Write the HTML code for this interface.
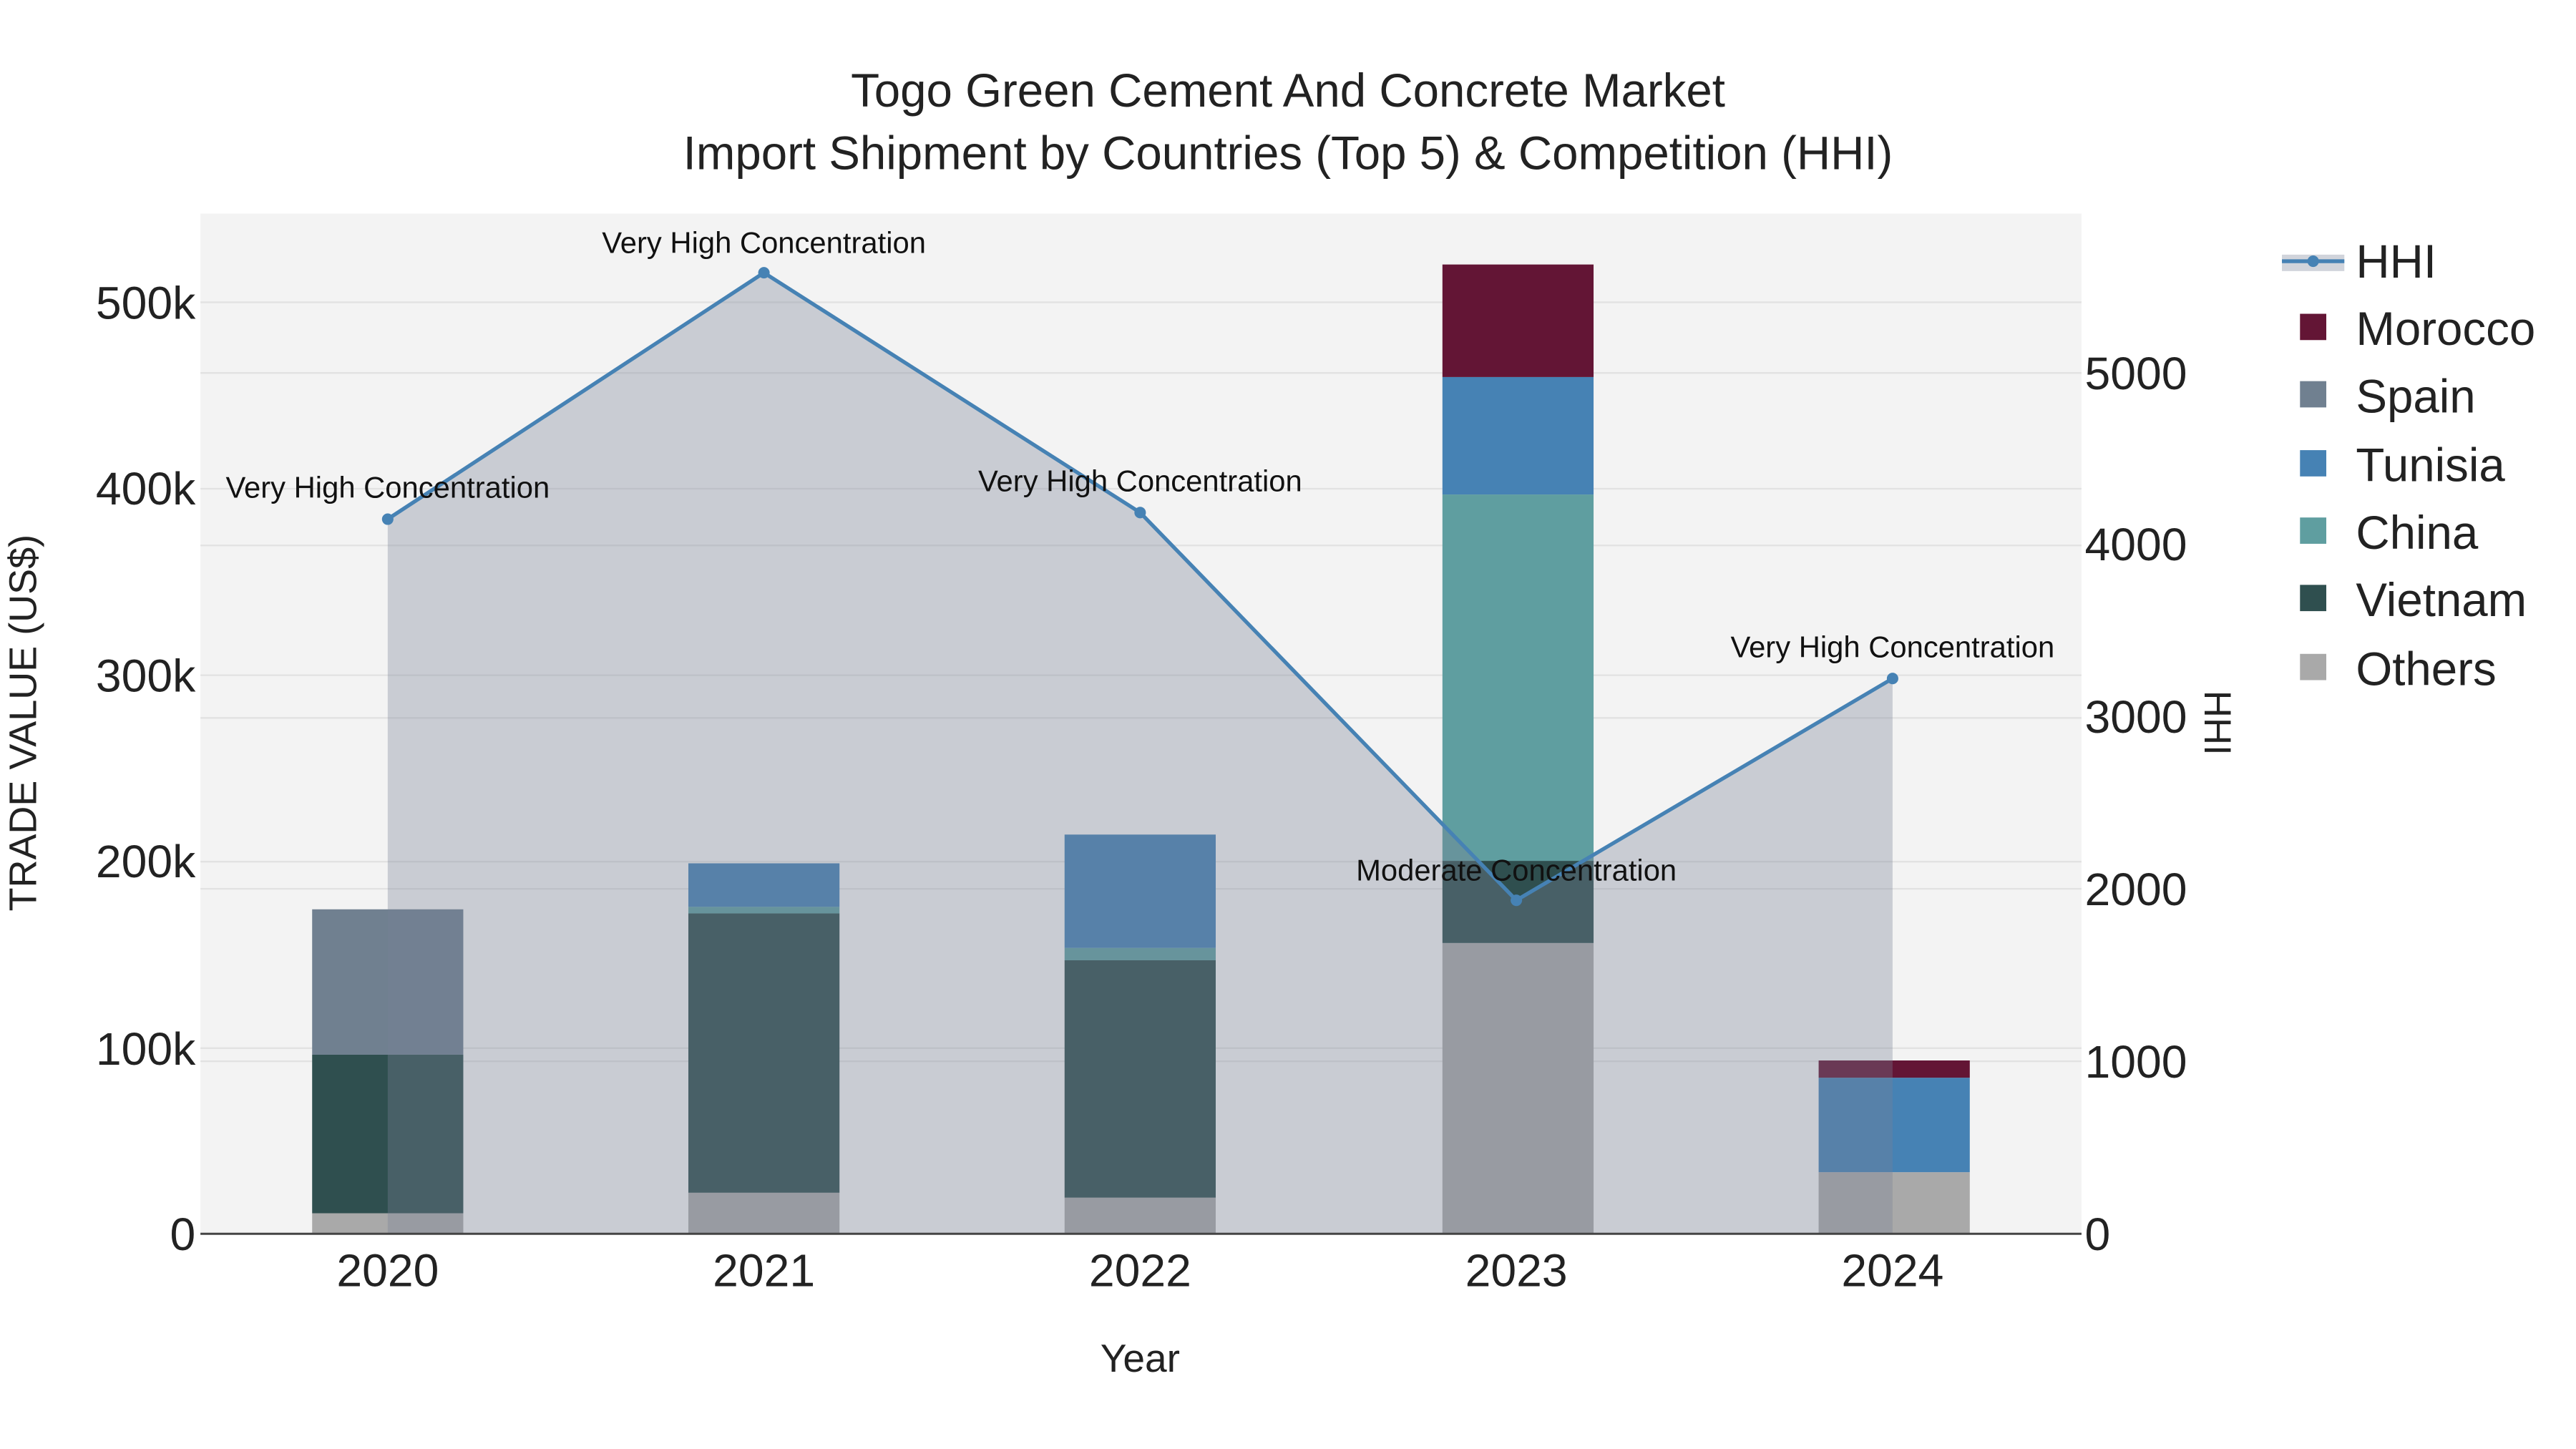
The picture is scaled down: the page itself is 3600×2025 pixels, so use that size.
<!DOCTYPE html>
<html><head><meta charset="utf-8"><style>
html,body{margin:0;padding:0;background:#fff;}
svg{display:block;}
text{font-family:"Liberation Sans",sans-serif;}
</style></head><body>
<svg width="3600" height="2025" viewBox="0 0 1568 882" preserveAspectRatio="none" xmlns="http://www.w3.org/2000/svg">
<rect x="0" y="0" width="1568" height="882" fill="#fff"/>
<rect x="122" y="130" width="1145" height="621" fill="#f3f3f3"/>
<g stroke="#e2e2e2" stroke-width="1">
<line x1="122" x2="1267" y1="184" y2="184"/><line x1="122" x2="1267" y1="297.5" y2="297.5"/>
<line x1="122" x2="1267" y1="411" y2="411"/><line x1="122" x2="1267" y1="524.5" y2="524.5"/>
<line x1="122" x2="1267" y1="638" y2="638"/>
<line x1="122" x2="1267" y1="227" y2="227"/><line x1="122" x2="1267" y1="332" y2="332"/>
<line x1="122" x2="1267" y1="437" y2="437"/><line x1="122" x2="1267" y1="541" y2="541"/>
<line x1="122" x2="1267" y1="646" y2="646"/>
</g>
<g>
<rect x="190" y="738.5" width="92" height="12.5" fill="#a9a9a9"/>
<rect x="190" y="642" width="92" height="96.5" fill="#2f4f4f"/>
<rect x="190" y="553.5" width="92" height="88.5" fill="#708090"/>

<rect x="419" y="726" width="92" height="25" fill="#a9a9a9"/>
<rect x="419" y="556" width="92" height="170" fill="#2f4f4f"/>
<rect x="419" y="552" width="92" height="4" fill="#5f9ea0"/>
<rect x="419" y="525.5" width="92" height="26.5" fill="#4682b4"/>

<rect x="648" y="729" width="92" height="22" fill="#a9a9a9"/>
<rect x="648" y="584.5" width="92" height="144.5" fill="#2f4f4f"/>
<rect x="648" y="577" width="92" height="7.5" fill="#5f9ea0"/>
<rect x="648" y="508" width="92" height="69" fill="#4682b4"/>

<rect x="878" y="574" width="92" height="177" fill="#a9a9a9"/>
<rect x="878" y="524" width="92" height="50" fill="#2f4f4f"/>
<rect x="878" y="301" width="92" height="223" fill="#5f9ea0"/>
<rect x="878" y="229.5" width="92" height="71.5" fill="#4682b4"/>
<rect x="878" y="161" width="92" height="68.5" fill="#631535"/>

<rect x="1107" y="713.5" width="92" height="37.5" fill="#a9a9a9"/>
<rect x="1107" y="656" width="92" height="57.5" fill="#4682b4"/>
<rect x="1107" y="645.5" width="92" height="10.5" fill="#631535"/>
</g>
<polygon points="236,316 465,166 694,312 923,548 1152,413 1152,751 236,751" fill="rgba(119,128,149,0.34)"/>
<polyline points="236,316 465,166 694,312 923,548 1152,413" fill="none" stroke="#4682b4" stroke-width="2.3"/>
<g fill="#4682b4"><circle cx="236" cy="316" r="3.5"/><circle cx="465" cy="166" r="3.5"/><circle cx="694" cy="312" r="3.5"/><circle cx="923" cy="548" r="3.5"/><circle cx="1152" cy="413" r="3.5"/></g>
<line x1="122" x2="1267" y1="751" y2="751" stroke="#444" stroke-width="1.3"/>
<g font-size="18.2" fill="#111" text-anchor="middle">
<text x="236" y="303">Very High Concentration</text>
<text x="465" y="154">Very High Concentration</text>
<text x="694" y="299">Very High Concentration</text>
<text x="923" y="536">Moderate Concentration</text>
<text x="1152" y="400">Very High Concentration</text>
</g>
<g font-size="28.5" fill="#222" text-anchor="middle">
<text x="784" y="65">Togo Green Cement And Concrete Market</text>
<text x="784" y="103">Import Shipment by Countries (Top 5) &amp; Competition (HHI)</text>
</g>
<g font-size="28" fill="#222" text-anchor="end">
<text x="119" y="761">0</text><text x="119" y="648">100k</text><text x="119" y="534">200k</text>
<text x="119" y="421">300k</text><text x="119" y="307">400k</text><text x="119" y="194">500k</text>
</g>
<g font-size="28" fill="#222" text-anchor="start">
<text x="1269" y="761">0</text><text x="1269" y="656">1000</text><text x="1269" y="551">2000</text>
<text x="1269" y="446">3000</text><text x="1269" y="341">4000</text><text x="1269" y="237">5000</text>
</g>
<g font-size="28" fill="#222" text-anchor="middle">
<text x="236" y="783">2020</text><text x="465" y="783">2021</text><text x="694" y="783">2022</text>
<text x="923" y="783">2023</text><text x="1152" y="783">2024</text>
<text x="694" y="835" font-size="24">Year</text>
</g>
<text transform="translate(22,440) rotate(-90)" font-size="23.5" fill="#222" text-anchor="middle">TRADE VALUE (US$)</text>
<text transform="translate(1342,440) rotate(90)" font-size="23" fill="#222" text-anchor="middle">HHI</text>
<rect x="1389" y="155" width="38" height="10" fill="rgba(119,128,149,0.34)"/>
<line x1="1389" x2="1427" y1="159" y2="159" stroke="#4682b4" stroke-width="2.3"/>
<circle cx="1408" cy="159" r="3.5" fill="#4682b4"/>
<rect x="1400" y="191" width="16" height="16" fill="#631535"/>
<rect x="1400" y="232" width="16" height="16" fill="#708090"/>
<rect x="1400" y="274" width="16" height="16" fill="#4682b4"/>
<rect x="1400" y="315" width="16" height="16" fill="#5f9ea0"/>
<rect x="1400" y="356" width="16" height="16" fill="#2f4f4f"/>
<rect x="1400" y="398" width="16" height="16" fill="#a9a9a9"/>
<g font-size="28.5" fill="#222">
<text x="1434" y="169">HHI</text><text x="1434" y="210">Morocco</text><text x="1434" y="251">Spain</text>
<text x="1434" y="293">Tunisia</text><text x="1434" y="334">China</text><text x="1434" y="375">Vietnam</text>
<text x="1434" y="417">Others</text>
</g>
</svg>
</body></html>
